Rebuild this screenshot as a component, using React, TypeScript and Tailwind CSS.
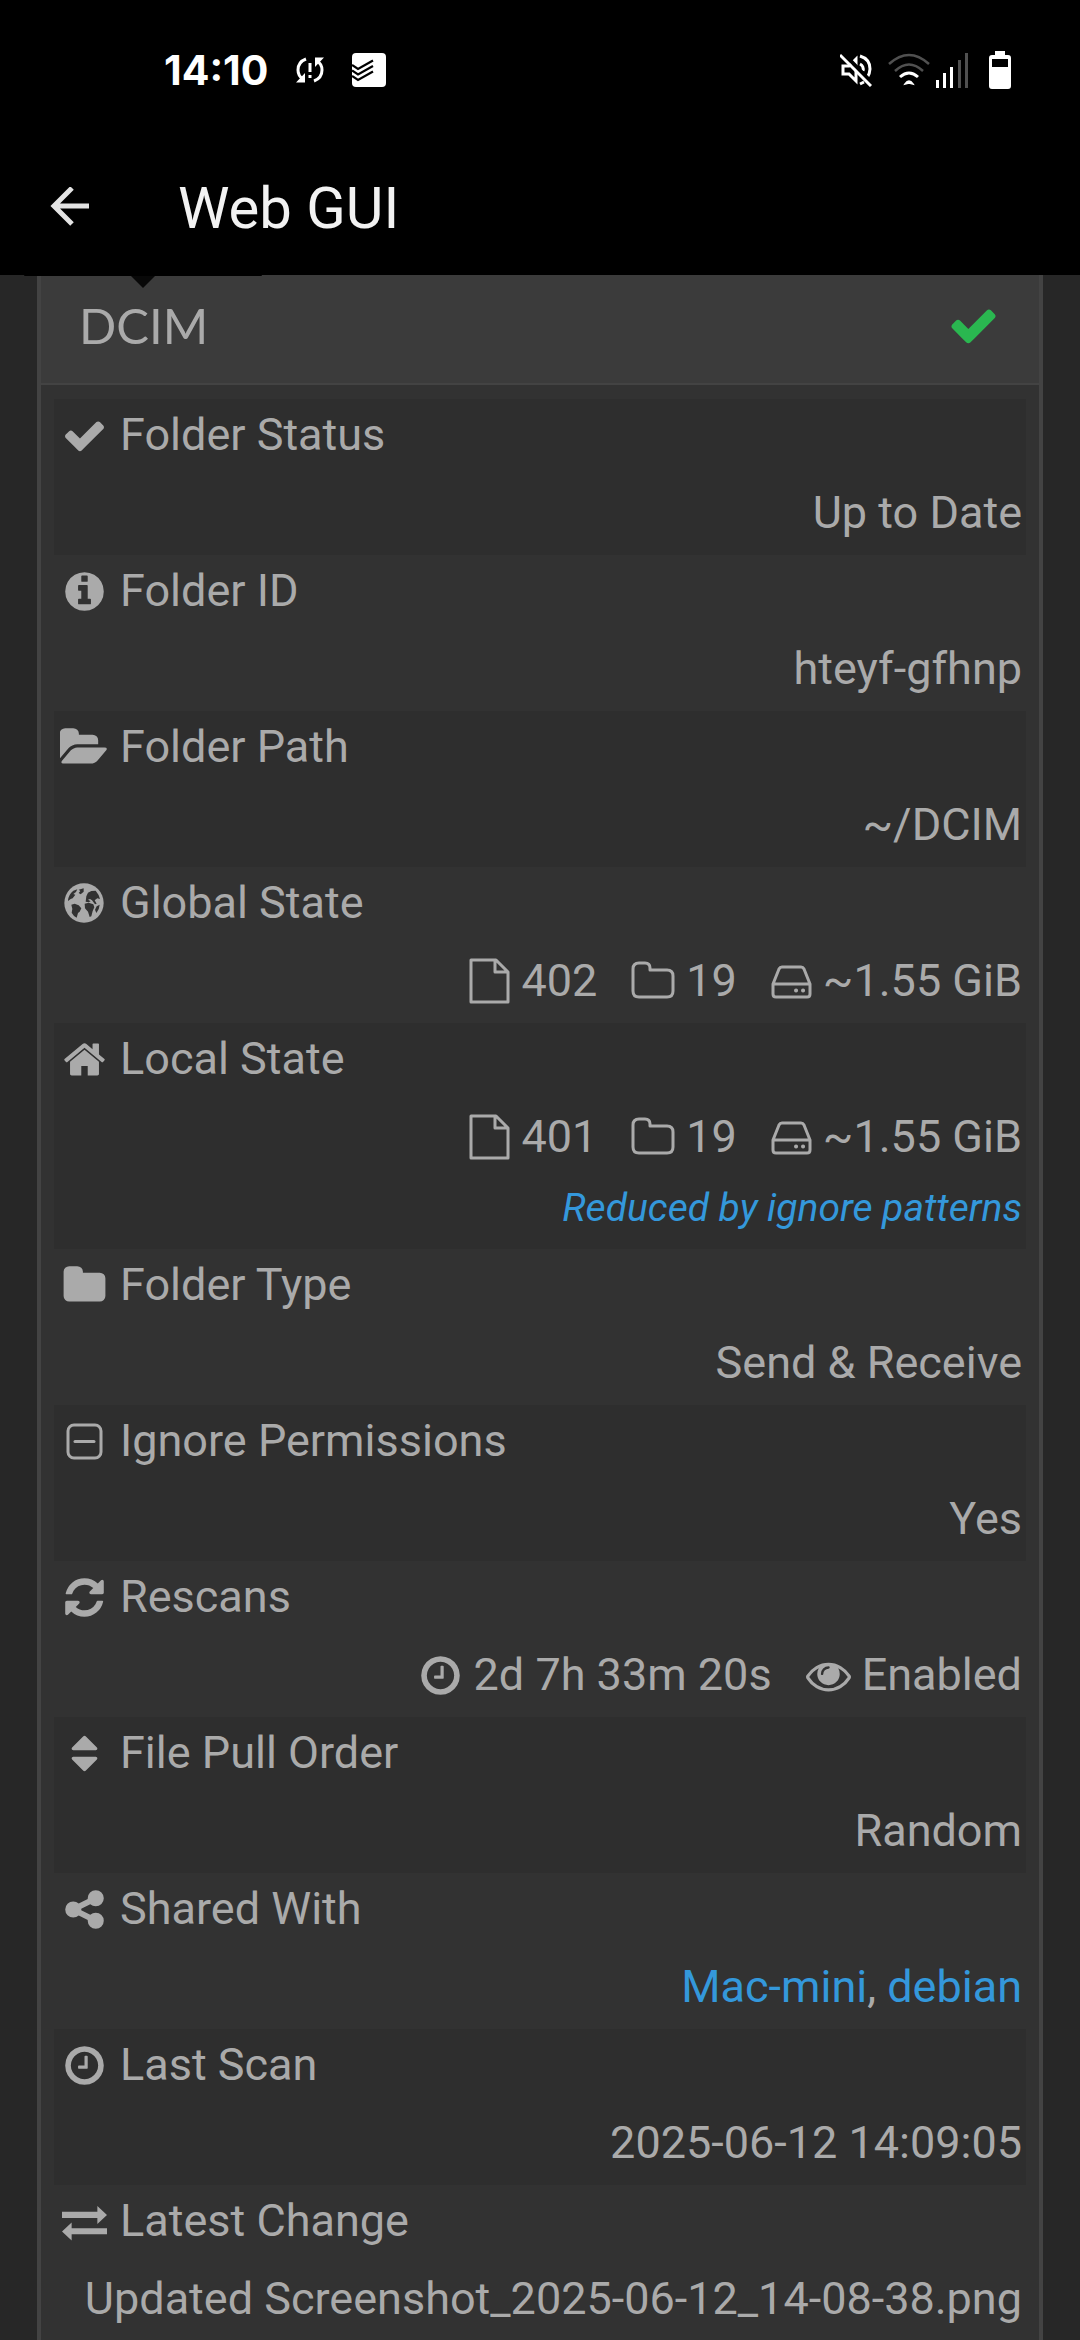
import { clsx } from "clsx";
import type { ReactNode } from "react";

type IconProps = {
  d: string;
  viewBox?: string;
  className?: string;
};

type Row = {
  label: string;
  icon: ReactNode;
  value: ReactNode;
};

const paths = {
  check:
    "M1671 566q0 40-28 68l-724 724-136 136q-28 28-68 28t-68-28l-136-136-362-362q-28-28-28-68t28-68l136-136q28-28 68-28t68 28l294 295 656-657q28-28 68-28t68 28l136 136q28 28 28 68z",
  info: "M1152 1376v-160q0-14-9-23t-23-9h-96v-512q0-14-9-23t-23-9h-320q-14 0-23 9t-9 23v160q0 14 9 23t23 9h96v320h-96q-14 0-23 9t-9 23v160q0 14 9 23t23 9h448q14 0 23-9t9-23zm-128-896v-192q0-14-9-23t-23-9h-192q-14 0-23 9t-9 23v192q0 14 9 23t23 9h192q14 0 23-9t9-23zm640 416q0 209-103 385.5t-279.5 279.5-385.5 103-385.5-103-279.5-279.5-103-385.5 103-385.5 279.5-279.5 385.5-103 385.5 103 279.5 279.5 103 385.5z",
  folder:
    "M1728 608v704q0 92-66 158t-158 66h-1216q-92 0-158-66t-66-158v-960q0-92 66-158t158-66h320q92 0 158 66t66 158v32h672q92 0 158 66t66 158z",
  folderOpen:
    "M1815 952q0 31-31 66l-336 396q-43 51-120.5 86.5t-143.5 35.5h-1088q-34 0-60.5-13t-26.5-43q0-31 31-66l336-396q43-51 120.5-86.5t143.5-35.5h1088q34 0 60.5 13t26.5 43zm-343-344v160h-832q-94 0-197 47.5t-164 119.5l-337 396-5 6q0-4-.5-12.5t-.5-12.5v-960q0-92 66-158t158-66h320q92 0 158 66t66 158v32h544q92 0 158 66t66 158z",
  home: "M1472 992v480q0 26-19 45t-45 19h-384v-384h-256v384h-384q-26 0-45-19t-19-45v-480q0-1 .5-3t.5-3l575-474 575 474q1 2 1 6zm223-69l-62 74q-8 9-21 11h-3q-13 0-21-7l-692-577-692 577q-12 8-24 7-13-2-21-11l-62-74q-8-10-7-23.5t11-21.5l719-599q32-26 76-26t76 26l244 204v-195q0-14 9-23t23-9h192q14 0 23 9t9 23v408l219 182q10 8 11 21.5t-7 23.5z",
  refresh:
    "M1639 1056q0 5-1 7-64 268-268 434.5t-478 166.5q-146 0-282.5-55t-243.5-157l-129 129q-19 19-45 19t-45-19-19-45v-448q0-26 19-45t45-19h448q26 0 45 19t19 45-19 45l-137 137q71 66 161 102t187 36q134 0 250-65t186-179q11-17 53-117 8-23 30-23h192q13 0 22.5 9.5t9.5 22.5zm25-800v448q0 26-19 45t-45 19h-448q-26 0-45-19t-19-45 19-45l138-138q-148-137-349-137-134 0-250 65t-186 179q-11 17-53 117-8 23-30 23h-199q-13 0-22.5-9.5t-9.5-22.5v-7q65-268 270-434.5t480-166.5q146 0 284 55.5t245 156.5l130-129q19-19 45-19t45 19 19 45z",
  clock:
    "M1024 544v448q0 14-9 23t-23 9h-320q-14 0-23-9t-9-23v-64q0-14 9-23t23-9h224v-352q0-14 9-23t23-9h64q14 0 23 9t9 23zm416 352q0-148-73-273t-198-198-273-73-273 73-198 198-73 273 73 273 198 198 273 73 273-73 198-198 73-273zm224 0q0 209-103 385.5t-279.5 279.5-385.5 103-385.5-103-279.5-279.5-103-385.5 103-385.5 279.5-279.5 385.5-103 385.5 103 279.5 279.5 103 385.5z",
  sort: "M1408 1088q0 26-19 45l-448 448q-19 19-45 19t-45-19l-448-448q-19-19-19-45t19-45 45-19h896q26 0 45 19t19 45zm0-384q0 26-19 45t-45 19h-896q-26 0-45-19t-19-45 19-45l448-448q19-19 45-19t45 19l448 448q19 19 19 45z",
  share:
    "M1344 1024q133 0 226.5 93.5t93.5 226.5-93.5 226.5-226.5 93.5-226.5-93.5-93.5-226.5q0-12 2-34l-360-180q-92 86-218 86-133 0-226.5-93.5t-93.5-226.5 93.5-226.5 226.5-93.5q126 0 218 86l360-180q-2-22-2-34 0-133 93.5-226.5t226.5-93.5 226.5 93.5 93.5 226.5-93.5 226.5-226.5 93.5q-126 0-218-86l-360 180q2 22 2 34t-2 34l360 180q92-86 218-86z",
  exchange:
    "M0 512H1408V280L1792 640L1408 1000V752H0ZM1792 1168H384V936L0 1296L384 1656V1408H1792Z",
  eye: "M1664 960q-152-236-381-353 61 104 61 225 0 185-131.5 316.5t-316.5 131.5-316.5-131.5-131.5-316.5q0-121 61-225-229 117-381 353 133 205 333.5 326.5t434.5 121.5 434.5-121.5 333.5-326.5zm-720-384q0-20-14-34t-34-14q-125 0-214.5 89.5t-89.5 214.5q0 20 14 34t34 14 34-14 14-34q0-86 61-147t147-61q20 0 34-14t14-34zm848 384q0 34-20 69-140 230-376.5 368.5t-499.5 138.5-499.5-139-376.5-368q-20-35-20-69t20-69q140-229 376.5-368t499.5-139 499.5 139 376.5 368q20 35 20 69z",
};

function Icon({ d, viewBox = "0 0 1792 1792", className }: IconProps) {
  return (
    <svg viewBox={viewBox} className={clsx("shrink-0 fill-current", className ?? "size-[45px]")} aria-hidden="true">
      <path d={d} />
    </svg>
  );
}

function OutlineIcon({ viewBox, className, children }: { viewBox: string; className: string; children: ReactNode }) {
  return (
    <svg
      viewBox={viewBox}
      className={clsx("shrink-0 fill-none stroke-current stroke-3", className)}
      strokeLinejoin="round"
      strokeLinecap="round"
      aria-hidden="true"
    >
      {children}
    </svg>
  );
}

function GlobeIcon() {
  return (
    <svg viewBox="72 72 120 120" className="size-10 shrink-0" aria-hidden="true">
      <circle cx="132" cy="132" r="59" fill="#aaaaaa" />
      <g fill="#323232">
        <path d="M84 124Q86 106 100 95L112 91L108 99L100 105L106 107L98 118L92 120L84 126ZM116 92L131 88L131 98L122 106L116 102L121 96Z" />
        <path d="M94 137L104 134L116 139L124 148L119 158L114 162L110 176Q100 171 95 161L97 150Z" />
        <path d="M139 112L144 101L154 96L167 95Q176 105 180 120L172 118L164 124L170 134L165 136L156 124L150 120L144 122L152 127L146 130L137 128Z" />
        <path d="M134 134L146 131L160 136L163 145L158 156L154 172L149 174L144 158L135 148Z" />
        <path d="M170 142L179 137Q178 152 169 162L165 152Z" />
      </g>
    </svg>
  );
}

function Stat({ icon, children }: { icon: ReactNode; children: ReactNode }) {
  return (
    <span className="flex items-center gap-[11px]">
      {icon}
      {children}
    </span>
  );
}

function StateStats({ files, folders, size }: { files: string; folders: string; size: string }) {
  return (
    <div className="flex justify-end gap-[34px]">
      <Stat
        icon={
          <OutlineIcon viewBox="0 0 41 46" className="h-[46px] w-[41px]">
            <path d="M2 2H27L39 14V44H2ZM26 2V14H39" />
          </OutlineIcon>
        }
      >
        {files}
      </Stat>
      <Stat
        icon={
          <OutlineIcon viewBox="0 0 44 46" className="h-[46px] w-[44px]">
            <path d="M2 11Q2 5 8 5H14Q19 5 19 10V12H36Q42 12 42 18V33Q42 39 36 39H8Q2 39 2 33Z" />
          </OutlineIcon>
        }
      >
        {folders}
      </Stat>
      <Stat
        icon={
          <OutlineIcon viewBox="0 0 41 46" className="h-[46px] w-[41px]">
            <path d="M2 26L8 11Q9 9 11 9H30Q32 9 33 11L39 26V36Q39 39 36 39H5Q2 39 2 36ZM2 26H39" />
            <path d="M25 32.500H25.100M32 32.500H32.100" className="stroke-4" />
          </OutlineIcon>
        }
      >
        {size}
      </Stat>
    </div>
  );
}

const rows: Row[] = [
  { label: "Folder Status", icon: <Icon d={paths.check} />, value: "Up to Date" },
  { label: "Folder ID", icon: <Icon d={paths.info} />, value: "hteyf-gfhnp" },
  {
    label: "Folder Path",
    icon: <Icon d={paths.folderOpen} viewBox="0 0 1815 1792" className="h-[45px] w-12" />,
    value: "~/DCIM",
  },
  { label: "Global State", icon: <GlobeIcon />, value: <StateStats files="402" folders="19" size="~1.55 GiB" /> },
  {
    label: "Local State",
    icon: <Icon d={paths.home} />,
    value: (
      <>
        <StateStats files="401" folders="19" size="~1.55 GiB" />
        <div className="text-[39px] leading-[70px] text-[#3498db] italic">Reduced by ignore patterns</div>
      </>
    ),
  },
  { label: "Folder Type", icon: <Icon d={paths.folder} />, value: "Send & Receive" },
  {
    label: "Ignore Permissions",
    icon: (
      <OutlineIcon viewBox="0 0 45 45" className="size-[45px]">
        <rect x="6" y="6" width="33" height="33" rx="6" />
        <path d="M13 22.500H32" />
      </OutlineIcon>
    ),
    value: "Yes",
  },
  {
    label: "Rescans",
    icon: <Icon d={paths.refresh} />,
    value: (
      <div className="flex justify-end gap-[34px]">
        <Stat icon={<Icon d={paths.clock} />}>2d 7h 33m 20s</Stat>
        <Stat icon={<Icon d={paths.eye} />}>Enabled</Stat>
      </div>
    ),
  },
  { label: "File Pull Order", icon: <Icon d={paths.sort} />, value: "Random" },
  {
    label: "Shared With",
    icon: <Icon d={paths.share} />,
    value: (
      <>
        <a href="#mac-mini" className="text-[#3498db]">
          Mac-mini
        </a>
        ,{" "}
        <a href="#debian" className="text-[#3498db]">
          debian
        </a>
      </>
    ),
  },
  { label: "Last Scan", icon: <Icon d={paths.clock} />, value: "2025-06-12 14:09:05" },
  {
    label: "Latest Change",
    icon: <Icon d={paths.exchange} />,
    value: "Updated Screenshot_2025-06-12_14-08-38.png",
  },
];

function StatusBar() {
  return (
    <div className="flex h-[140px] items-center justify-between pr-[69px] pl-[164px] text-white">
      <div className="flex items-center">
        <span className="font-['Inter',sans-serif] text-[41px] leading-none font-bold">14:10</span>
        <svg viewBox="0 0 28 26" className="ml-7 h-[26px] w-7" fill="none" stroke="#fff" strokeWidth="3" aria-hidden="true">
          <path d="M10 2Q2 5 2 13Q2 19 7 22M18 24Q26 21 26 13Q26 7 21 4" />
          <path d="M0 25.500L9 25.500L9 16ZM28 .5L19 .5L19 10Z" fill="#fff" stroke="none" />
          <path d="M14 6V15M14 18V21" />
        </svg>
        <svg viewBox="0 0 34 34" className="ml-7 size-[34px]" aria-hidden="true">
          <rect width="34" height="34" rx="4" fill="#fff" />
          <path d="M0 12L6 16L21 7.500M0 17.500L6 21.500L21 13M0 23L6 27L21 18.500" fill="none" stroke="#000" strokeWidth="2.200" />
        </svg>
      </div>
      <div className="flex items-center">
        <svg viewBox="0 0 32 34" className="h-[34px] w-8" fill="none" stroke="#fff" strokeWidth="3" aria-hidden="true">
          <path d="M3 13H9L16 6V28L9 21H3ZM20 3Q30 6 30 16Q30 20 27 25M20 11Q24 13 23 18M20 31L24 29" />
          <path d="M3 0L33 31" stroke="#000" strokeWidth="4" />
          <path d="M0 2L31 33" />
        </svg>
        <svg viewBox="0 0 42 34" className="ml-4 h-[34px] w-[42px]" fill="none" stroke="#fff" strokeWidth="2.500" aria-hidden="true">
          <path d="M1 11Q21 -7 41 11M7 18Q21 5 35 18" stroke="#505050" />
          <path d="M12 24Q21 16 30 24" strokeWidth="3" />
          <path d="M17 31Q21 25 25 31L21 30Z" fill="#fff" strokeWidth="1.500" />
        </svg>
        <svg viewBox="0 0 33 36" className="ml-1.5 h-9 w-[33px]" aria-hidden="true">
          <path d="M0 28H3V36H0ZM7 21H10V36H7ZM14 15H17V36H14Z" fill="#fff" />
          <path d="M22 8H25V36H22ZM29 1H32V36H29Z" fill="#505050" />
        </svg>
        <svg viewBox="0 0 22 38" className="ml-5 h-[38px] w-[22px]" aria-hidden="true">
          <path d="M6 0H16V4H19Q22 4 22 7V35Q22 38 19 38H3Q0 38 0 35V7Q0 4 3 4H6Z" fill="#fff" />
          <path d="M3 8H19V16H3Z" fill="#000" />
        </svg>
      </div>
    </div>
  );
}

export default function App() {
  return (
    <div className="h-screen overflow-hidden bg-[#272727] font-['Roboto',sans-serif] text-[45px] text-[#aaaaaa]">
      <header className="bg-black">
        <StatusBar />
        <div className="flex h-[135px] items-center gap-[72px] px-[34px]">
          <button type="button" aria-label="Back" className="flex size-[72px] items-center justify-center text-[#e3e3e3]">
            <svg viewBox="0 1 40 42" className="h-[42px] w-10" fill="none" stroke="currentColor" strokeWidth="5" aria-hidden="true">
              <path d="M39 20H4M22 2L4 20L22 38" />
            </svg>
          </button>
          <h1 className="text-[58px] leading-[68px] text-[#f2f2f2]">Web GUI</h1>
        </div>
      </header>

      <main className="relative px-[37px]">
        {/* bottom edge of the tooltip that is scrolled under the app bar */}
        <div className="absolute top-0 left-6 w-[238px]">
          <div className="h-px rounded-b-sm bg-black" />
          <div className="mx-auto h-3 w-6 bg-[#080808] [clip-path:polygon(0_0,100%_0,50%_100%)]" />
        </div>
        <section className="border-x-4 border-[#434343] bg-[#323232]">
          <button
            type="button"
            className="flex h-[110px] w-full items-center justify-between border-b-2 border-[#434343] bg-[#3b3b3b] pr-10 pb-2 pl-[38px] text-left"
          >
            <span className="font-['Lato',sans-serif] text-[49px] leading-[60px]">DCIM</span>
            <Icon d={paths.check} className="size-[51px] text-[#2ab750]" />
          </button>
          <div className="px-[13px] pt-3.5">
            <table className="w-full">
              <tbody>
                {rows.map((row) => (
                  <tr key={row.label} className="block odd:bg-[#2e2e2e]">
                    <th scope="row" className="flex h-[78px] items-center gap-3 px-1.5 pb-1.5 text-left font-normal">
                      <span className="flex w-12 shrink-0 justify-center">{row.icon}</span>
                      {row.label}
                    </th>
                    <td className="block px-1 pb-1.5 text-right leading-[72px] whitespace-nowrap">{row.value}</td>
                  </tr>
                ))}
              </tbody>
            </table>
          </div>
        </section>
      </main>
    </div>
  );
}
